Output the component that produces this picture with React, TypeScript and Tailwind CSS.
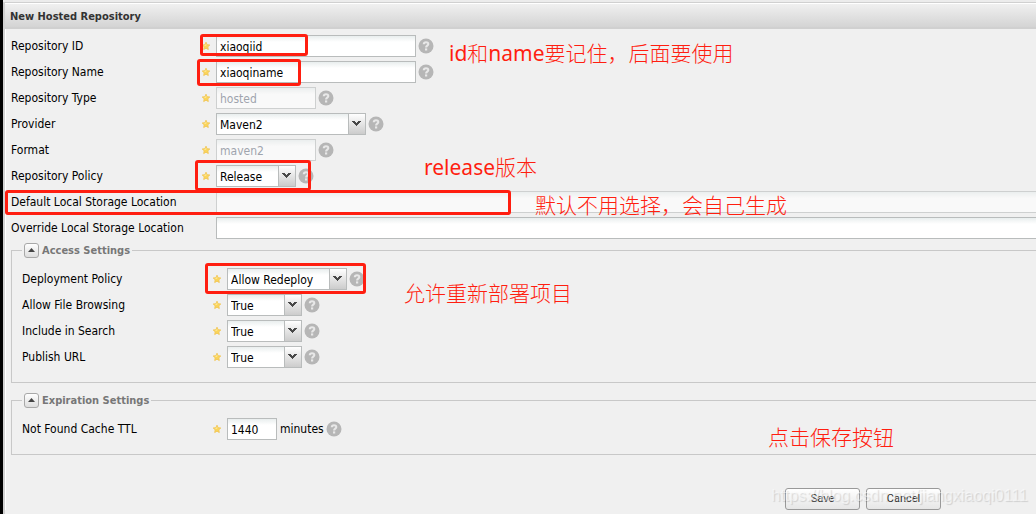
import type { ReactNode } from 'react'

const FIELD = 'h-[22px] border border-[#b9bcbc] bg-linear-to-b from-[#e9eeee] to-white to-30% px-[3px] pt-px text-black outline-none rounded-none'

function Star() {
  return (
    <svg className="w-[10px] h-[10px] shrink-0" viewBox="0 0 10 10" aria-hidden="true">
      <path
        d="M5 1.2 6.1 3.7 8.8 4 6.8 5.8 7.3 8.5 5 7.2 2.7 8.5 3.2 5.8 1.2 4 3.9 3.7Z"
        fill="#fbd558"
        stroke="#f0c658"
        strokeWidth=".9"
        strokeLinejoin="round"
      />
      <path d="M5 2.4 5.5 4.3 4 5 2.8 4.4 4.3 4.2Z" fill="#ffeeaa" />
    </svg>
  )
}

function Help() {
  return (
    <svg className="w-4 h-4 shrink-0" viewBox="0 0 16 16" role="img" aria-label="Help">
      <circle cx="8" cy="8" r="7.5" fill="#b6b6b6" />
      <path d="M5.8 6.2C5.8 3.5 10.3 3.6 10.3 6 10.3 7.7 8.1 7.6 8.1 9.5" fill="none" stroke="#e8e8e8" strokeWidth="2.1" />
      <rect x="7" y="10.4" width="2.2" height="2.1" fill="#e8e8e8" />
    </svg>
  )
}

function Row({ id, label, required = true, help = true, children }: {
  id: string
  label: string
  required?: boolean
  help?: boolean
  children: ReactNode
}) {
  return (
    <div className="flex items-center h-[22px]">
      <label htmlFor={id} className="w-[190px] shrink-0 whitespace-nowrap">{label}</label>
      <div className="w-[15px] shrink-0">{required && <Star />}</div>
      {children}
      {help && <span className="ml-[2px]"><Help /></span>}
    </div>
  )
}

function Combo({ id, value, options, width }: { id: string; value: string; options: string[]; width: string }) {
  return (
    <div className={`relative h-[22px] ${width}`}>
      <select id={id} defaultValue={value} className={`${FIELD} w-full appearance-none`}>
        {options.map((o) => <option key={o}>{o}</option>)}
      </select>
      <span className="absolute right-0 top-0 w-[18px] h-[22px] border border-[#b9bcbc] bg-linear-to-b from-white to-[#cccccc] pointer-events-none flex justify-center pt-[7px] pr-px">
        <svg className="w-[9px] h-[6px]" viewBox="0 0 9 6" aria-hidden="true">
          <path d="M0 0h3v1h1v1h1V1h1V0h3v1H8v1H7v1H6v1H5v1H4V4H3V3H2V2H1V1H0Z" fill="#484848" />
        </svg>
      </span>
    </div>
  )
}

function Group({ title, className, children }: { title: string; className: string; children: ReactNode }) {
  return (
    <fieldset className={`border border-[#c8c8c8] pl-[10px] ${className}`}>
      <legend className="flex items-center h-4 px-[2px] text-[11px] font-bold text-[#777]">
        <button
          type="button"
          aria-label={`Collapse ${title}`}
          className="w-[15px] h-[15px] mr-[3px] rounded-[3px] border border-[#a8a8a8] bg-linear-to-b from-white to-[#ddd] flex items-center justify-center"
        >
          <svg className="w-[7px] h-1" viewBox="0 0 7 4" aria-hidden="true">
            <path d="M0 4 3.5 0 7 4Z" fill="#444" />
          </svg>
        </button>
        <span className="pt-px">{title}</span>
      </legend>
      {children}
    </fieldset>
  )
}

const BOXES = [
  'left-[200px] top-[34px] w-[108px] h-[22px]',
  'left-[197px] top-[59px] w-[104px] h-[27px]',
  'left-[195px] top-[160px] w-[116px] h-[31px]',
  'left-[5px] top-[190px] w-[506px] h-[25px]',
  'left-[205px] top-[263px] w-[161px] h-[31px]',
]

const NOTES = [
  { text: <><b>id</b>和<b>name</b>要记住，后面要使用</>, pos: 'left-[449px] top-[39px]' },
  { text: <><b>release</b>版本</>, pos: 'left-[424px] top-[153px]' },
  { text: '默认不用选择，会自己生成', pos: 'left-[535px] top-[191px]' },
  { text: '允许重新部署项目', pos: 'left-[404px] top-[279px]' },
  { text: '点击保存按钮', pos: 'left-[768px] top-[423px]' },
]

export default function App() {
  return (
    <div className="relative flex flex-col min-h-screen overflow-hidden border-l-[3px] border-black bg-[#f0f0f0] font-['DejaVu_Sans_Condensed','DejaVu_Sans',sans-serif] text-[12px] leading-4 text-black">
      <div className="h-[2px] bg-[#ececec]" />
      <main className="grow border-l-2 border-t border-[#d0d0d0]">
        <h1 className="h-[26px] border-t border-t-white border-b-2 border-b-[#d0d0d0] bg-linear-to-b from-[#f0f0f0] to-[#d4d4d4] pl-[5px] pt-[5px] text-[11px] font-bold text-[#333]">
          New Hosted Repository
        </h1>

        <form className="border-l border-white pl-[5px] pt-[6px]" onSubmit={(e) => e.preventDefault()}>
          <div className="flex flex-col gap-1">
            <Row id="repo-id" label="Repository ID">
              <input id="repo-id" defaultValue="xiaoqiid" className={`${FIELD} w-[200px]`} />
            </Row>
            <Row id="repo-name" label="Repository Name">
              <input id="repo-name" defaultValue="xiaoqiname" className={`${FIELD} w-[200px]`} />
            </Row>
            <Row id="repo-type" label="Repository Type">
              <input id="repo-type" defaultValue="hosted" disabled className={`${FIELD} w-[100px] opacity-60 text-gray-500`} />
            </Row>
            <Row id="provider" label="Provider">
              <Combo id="provider" value="Maven2" options={['Maven1', 'Maven2']} width="w-[150px]" />
            </Row>
            <Row id="format" label="Format">
              <input id="format" defaultValue="maven2" disabled className={`${FIELD} w-[100px] opacity-60 text-gray-500`} />
            </Row>
            <Row id="policy" label="Repository Policy">
              <Combo id="policy" value="Release" options={['Release', 'Snapshot']} width="w-[80px]" />
            </Row>
            <Row id="default-location" label="Default Local Storage Location" required={false} help={false}>
              <input id="default-location" disabled className={`${FIELD} grow -mr-1 opacity-60`} />
            </Row>
            <Row id="override-location" label="Override Local Storage Location" required={false} help={false}>
              <input id="override-location" className={`${FIELD} grow -mr-1`} />
            </Row>
          </div>

          <Group title="Access Settings" className="mt-[3px] -mr-1 pt-[10px] pb-[14px]">
            <div className="flex flex-col gap-1">
              <Row id="deployment" label="Deployment Policy">
                <Combo id="deployment" value="Allow Redeploy" options={['Allow Redeploy', 'Disable Redeploy', 'Read Only']} width="w-[120px]" />
              </Row>
              <Row id="browsing" label="Allow File Browsing">
                <Combo id="browsing" value="True" options={['True', 'False']} width="w-[75px]" />
              </Row>
              <Row id="search" label="Include in Search">
                <Combo id="search" value="True" options={['True', 'False']} width="w-[75px]" />
              </Row>
              <Row id="publish" label="Publish URL">
                <Combo id="publish" value="True" options={['True', 'False']} width="w-[75px]" />
              </Row>
            </div>
          </Group>

          <Group title="Expiration Settings" className="mt-[9px] -mr-1 pt-[10px] pb-[14px]">
            <Row id="ttl" label="Not Found Cache TTL">
              <input id="ttl" defaultValue="1440" className={`${FIELD} w-[50px]`} />
              <span className="ml-[3px]">minutes</span>
            </Row>
          </Group>

          <div className="flex justify-end gap-[6px] mt-[33px] pr-[95px] text-[11px] font-['Roboto','Liberation_Sans',sans-serif] text-[#333]">
            <button type="submit" className="w-[75px] h-[22px] rounded-[3px] border border-[#999] bg-linear-to-b from-white to-[#e6e6e6]">Save</button>
            <button type="button" className="w-[75px] h-[22px] rounded-[3px] border border-[#999] bg-linear-to-b from-white to-[#e6e6e6]">Cancel</button>
          </div>
        </form>
      </main>

      {/* Red marks and notes over the form */}
      <div className="absolute inset-y-0 -left-[3px] right-0 pointer-events-none">
        {BOXES.map((box) => (
          <div key={box} className={`absolute border-[3px] border-[#ff1e10] rounded-[3px] ${box}`} />
        ))}
        {NOTES.map((note) => (
          <p key={note.pos} className={`absolute whitespace-nowrap text-[21px] leading-7 font-light [&_b]:font-normal text-[#ff1e10] font-['Noto_Sans','Noto_Sans_CJK_SC',sans-serif] ${note.pos}`}>
            {note.text}
          </p>
        ))}
        <p className="absolute right-2 bottom-2 text-[16px] leading-5 text-white/50 [text-shadow:1px_1px_1px_#0002] font-['Liberation_Sans',Arial,sans-serif]">
          https://blog.csdn.net/jiangxiaoqi0111
        </p>
      </div>
    </div>
  )
}
